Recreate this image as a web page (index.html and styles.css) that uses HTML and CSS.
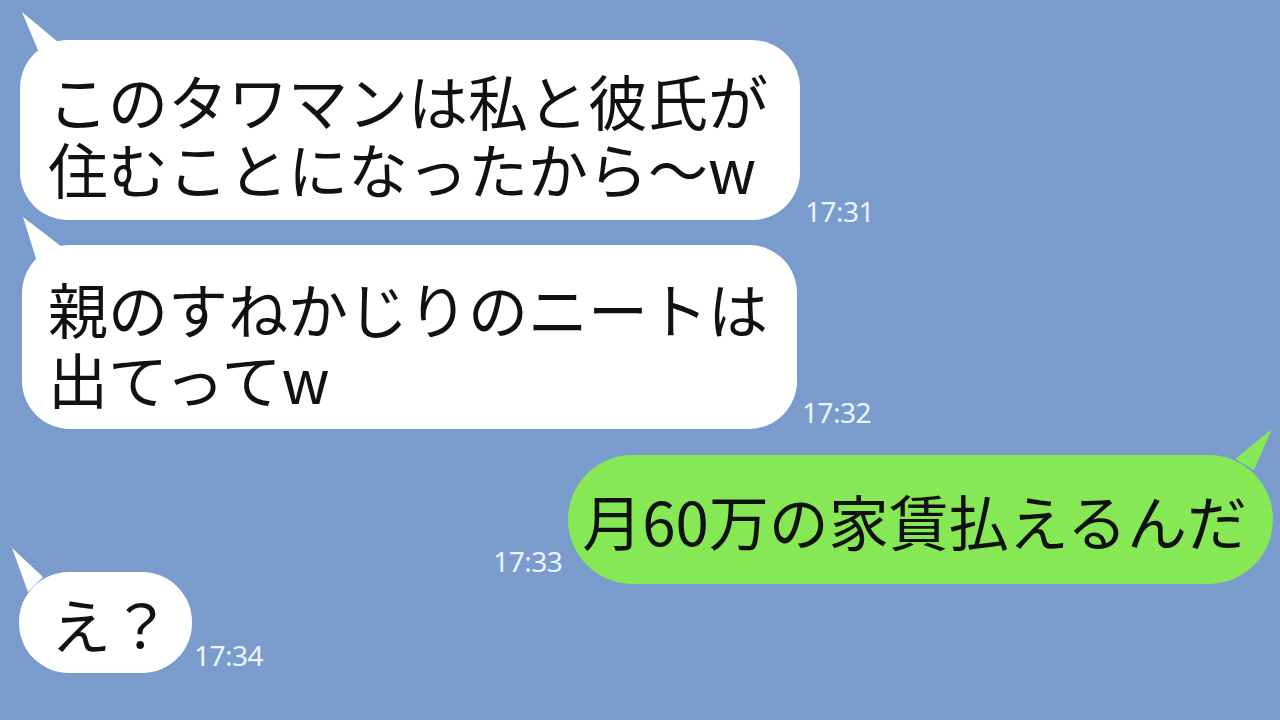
FILE: index.html
```html
<!DOCTYPE html>
<html lang="ja">
<head>
    <meta charset="UTF-8">
    <meta name="viewport" content="width=device-width, initial-scale=1.0">
    <title>トーク</title>
    <link rel="stylesheet" href="styles.css">
</head>
<body>
    <main class="chat">
        <div class="row row-in first">
            <div class="bubble in b1">
                <p>このタワマンは私と彼氏が<br>住むことになったから〜w</p>
            </div>
            <span class="time t1">17:31</span>
        </div>
        <div class="row row-in second">
            <div class="bubble in b2">
                <p>親のすねかじりのニートは<br>出てってw</p>
            </div>
            <span class="time t2">17:32</span>
        </div>
        <div class="row row-out third">
            <span class="time t3">17:33</span>
            <div class="bubble out b3">
                <p>月60万の家賃払えるんだ</p>
            </div>
        </div>
        <div class="row row-in fourth">
            <div class="bubble in b4">
                <p>え？</p>
            </div>
            <span class="time t4">17:34</span>
        </div>
    </main>
</body>
</html>
```

FILE: styles.css
```css
body {
    margin: 0;
    padding: 0;
    width: 1280px;
    height: 720px;
    overflow: hidden;
    background-color: #7a9ccc;
    font-family: "Noto Sans CJK JP", "Noto Sans", sans-serif;
    color: #111;
}

.chat {
    display: flex;
    flex-direction: column;
}

.row {
    display: flex;
    align-items: flex-end;
}

.row-out {
    justify-content: flex-end;
}

.bubble {
    position: relative;
    background: #fff;
}

.bubble p {
    margin: 0;
    white-space: nowrap;
}

.bubble::before {
    content: "";
    position: absolute;
    background: inherit;
}

.out {
    background: #86e855;
}

.time {
    font-family: "Noto Sans", sans-serif;
    font-size: 28px;
    line-height: 28px;
    color: #eef4ff;
    letter-spacing: -0.5px;
}

/* 1 */
.first {
    margin-top: 40px;
    padding-left: 20px;
}

.b1 {
    border-radius: 48px;
    padding: 26px 32px 18px 28px;
    font-size: 60px;
    line-height: 68px;
}

.b1::before {
    left: 0;
    top: -30px;
    width: 45px;
    height: 60px;
    clip-path: polygon(2px 2px, 20px 45px, 38px 32px);
}

.t1 {
    margin-left: 5px;
    margin-bottom: -5px;
}

/* 2 */
.second {
    margin-top: 25px;
    padding-left: 22px;
}

.b2 {
    border-radius: 48px;
    padding: 28px 29px 16px 26px;
    font-size: 60px;
    line-height: 70px;
}

.b2::before {
    left: 0;
    top: -30px;
    width: 45px;
    height: 60px;
    clip-path: polygon(1px 2px, 16px 50px, 40px 32px);
}

.t2 {
    margin-left: 5px;
    margin-bottom: 3px;
}

/* 3 */
.third {
    margin-top: 26px;
    padding-right: 7px;
}

.b3 {
    border-radius: 65px;
    padding: 0 26px 0 14px;
    height: 129px;
    display: flex;
    align-items: center;
    font-size: 60px;
    line-height: 70px;
}

.b3::before {
    right: 0;
    top: -30px;
    width: 45px;
    height: 50px;
    clip-path: polygon(44px 4px, 7px 34px, 26px 45px);
}

.t3 {
    margin-right: 6px;
    margin-bottom: 9px;
}

/* 4 */
.fourth {
    margin-top: -12px;
    padding-left: 19px;
}

.b4 {
    border-radius: 50px;
    padding: 18px 21px 18px 32px;
    font-size: 60px;
    line-height: 65px;
}

.b4::before {
    left: -10px;
    top: -28px;
    width: 45px;
    height: 55px;
    clip-path: polygon(3px 4px, 19px 48px, 34px 33px);
}

.t4 {
    margin-left: 2px;
    margin-bottom: 4px;
}
```
